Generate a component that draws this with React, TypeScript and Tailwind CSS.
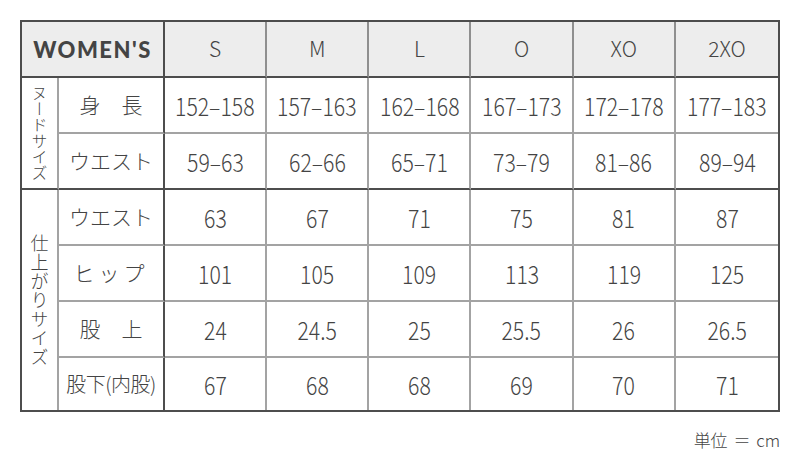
const SIZES = ["S", "M", "L", "O", "XO", "2XO"];

const NUDE = [
  { label: "身　長", values: ["152–158", "157–163", "162–168", "167–173", "172–178", "177–183"] },
  { label: "ウエスト", values: ["59–63", "62–66", "65–71", "73–79", "81–86", "89–94"] },
];

const FINISHED = [
  { label: "ウエスト", values: ["63", "67", "71", "75", "81", "87"] },
  { label: "ヒップ", values: ["101", "105", "109", "113", "119", "125"], spaced: true },
  { label: "股　上", values: ["24", "24.5", "25", "25.5", "26", "26.5"] },
  { label: "股下(内股)", values: ["67", "68", "68", "69", "70", "71"], small: true },
];

const DARK = "border-[#4d4d4d]";
const LIGHT = "border-[#a3a3a3]";

function Row({
  label,
  values,
  bottom,
  small,
  spaced,
}: {
  label: string;
  values: string[];
  bottom: "light" | "dark" | "none";
  small?: boolean;
  spaced?: boolean;
}) {
  const b =
    bottom === "none" ? "" : bottom === "dark" ? `border-b-2 ${DARK}` : `border-b-2 ${LIGHT}`;
  return (
    <>
      <div
        className={`flex items-center justify-center border-r-2 border-r-[#4d4d4d] ${b} ${
          small ? "text-[20px] tracking-[-0.5px]" : "text-[21px]"
        } ${spaced ? "tracking-[4px]" : ""}`}
      >
        {label}
      </div>
      {values.map((v, i) => (
        <div
          key={i}
          className={`flex items-center justify-center ${b} ${
            i < values.length - 1 ? "border-r-2 border-r-[#a3a3a3]" : ""
          }`}
        >
          <span className="inline-block scale-x-[0.85] whitespace-nowrap text-[25px] leading-none">{v}</span>
        </div>
      ))}
    </>
  );
}

export default function App() {
  return (
    <div
      className="h-[460px] w-[800px] bg-white px-[20px] pt-[20px] font-light text-[#444]"
      style={{ fontFamily: '"Noto Sans CJK JP", "Noto Sans", sans-serif' }}
    >
      <div
        className={`grid grid-cols-[37px_106px_repeat(6,minmax(0,1fr))] grid-rows-[56px_56px_56px_56px_56px_56px_52px] border-2 ${DARK}`}
      >
        <div
          className={`col-span-2 flex items-center justify-center border-b-2 border-r-2 ${DARK} bg-[#ededed] text-[22px] font-black tracking-[1.5px]`}
          style={{ fontFamily: 'Lato, "Noto Sans", sans-serif' }}
        >
          WOMEN'S
        </div>
        {SIZES.map((s, i) => (
          <div
            key={s}
            className={`flex items-center justify-center border-b-2 border-b-[#4d4d4d] bg-[#ededed] text-[21px] ${
              i < SIZES.length - 1 ? "border-r-2 border-r-[#8f8f8f]" : ""
            }`}
          >
            {s}
          </div>
        ))}

        <div
          className={`row-span-2 flex items-center justify-center border-b-2 border-b-[#4d4d4d] border-r-2 border-r-[#a3a3a3] text-[16px] leading-none [writing-mode:vertical-rl]`}
        >
          ヌードサイズ
        </div>
        <Row {...NUDE[0]} bottom="light" />
        <Row {...NUDE[1]} bottom="dark" />

        <div
          className={`row-span-4 flex items-center justify-center border-r-2 border-r-[#a3a3a3] text-[18px] leading-none tracking-[1px] [writing-mode:vertical-rl]`}
        >
          仕上がりサイズ
        </div>
        {FINISHED.map((r, i) => (
          <Row key={i} {...r} bottom={i === FINISHED.length - 1 ? "none" : "light"} />
        ))}
      </div>
      <div className="mt-[15px] flex justify-end text-[17px]">
        <span>
          単位 <span className="mx-[2px]">＝</span> cm
        </span>
      </div>
    </div>
  );
}
